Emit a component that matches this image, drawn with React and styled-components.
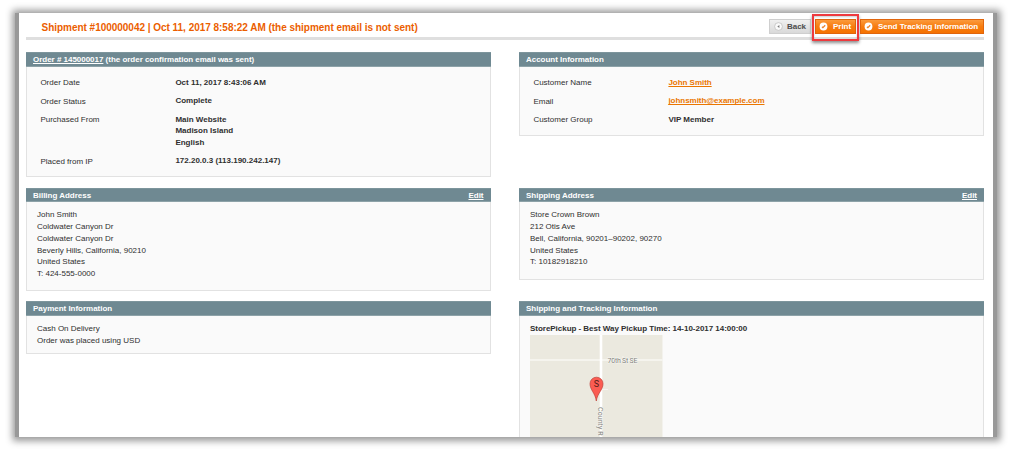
import React from "react";
import styled, { createGlobalStyle, css } from "styled-components";

const GlobalStyle = createGlobalStyle`
  * { box-sizing: border-box; }
  body {
    margin: 0;
    background: #fff;
    font-family: "Liberation Sans", Arial, sans-serif;
    font-size: 8px;
    line-height: 11.8px;
    color: #2f2f2f;
    overflow: hidden;
  }
`;

const Stage = styled.div`
  height: 451px;
  padding: 13px 15px 14px;
`;

const Shadow = styled.div`
  height: 424px;
  padding: 0 4px;
  background: #999;
  box-shadow: 0 0.5px 7px 3.5px #999;
`;

const Sheet = styled.main`
  height: 100%;
  padding: 6px 9px 0 7px;
  background: #fff;
  overflow: hidden;
`;

const Header = styled.header`
  display: flex;
  justify-content: space-between;
  height: 21px;
  border-bottom: 3px solid #dfdfdf;
`;

const Title = styled.h1`
  margin: 0;
  padding: 3px 0 0 15.5px;
  font-size: 10px;
  line-height: 12px;
  letter-spacing: -0.025px;
  color: #eb5e00;
  white-space: nowrap;
`;

const Actions = styled.div`
  display: flex;
  gap: 4px;
`;

const Button = styled.button`
  position: relative;
  display: flex;
  align-items: center;
  gap: 5px;
  width: ${(p) => p.$width}px;
  height: 15px;
  padding: 0 0 0 3px;
  border: 1px solid #e0650c;
  background: linear-gradient(#fb9a3c, #f77d10 50%, #f57200);
  color: #fff;
  font: bold 8px/12px "Liberation Sans", Arial, sans-serif;
  letter-spacing: -0.03px;
  white-space: nowrap;
  ${(p) =>
    p.$muted &&
    css`
      padding-left: 4px;
      gap: 4px;
      border-color: #cfcfcf;
      background: linear-gradient(#f0f0f0, #d9d9d9);
      color: #4c4c4c;
    `}
`;

const Highlight = styled.span`
  position: absolute;
  inset: -6px -4px -8px -4px;
  border: 2px solid #ee3a3f;
  box-shadow: 0 2px 3px rgba(0, 0, 0, 0.45), inset 0 1px 2px rgba(0, 0, 0, 0.2);
`;

const Columns = styled.div`
  display: grid;
  grid-template-columns: 464.5px 465px;
  grid-template-rows: 125px 103px auto;
  gap: 10.5px 28.5px;
  align-items: start;
  padding-top: 12px;
`;

const Panel = styled.section`
  height: ${(p) => p.$height}px;
  border: 1px solid #e2e2e2;
  border-top: 0;
  background: #fafafa;
`;

const PanelHead = styled.header`
  display: flex;
  justify-content: space-between;
  height: 14.5px;
  margin: 0 -1px;
  padding: 0 7px;
  border: 1px solid #64818a;
  border-top-color: #7d959c;
  border-bottom-color: #8da2a8;
  border-width: 1px 0;
  background: #6f8992;
  color: #fff;
  font-weight: bold;
  line-height: 13px;
  letter-spacing: -0.02px;
`;

const HeadLink = styled.a`
  text-decoration: underline;
`;

const Facts = styled.dl`
  display: grid;
  grid-template-columns: 135px 1fr;
  row-gap: 6.5px;
  margin: 0;
  padding: 10.5px 14px 0 13.4px;
`;

const Label = styled.dt`
  padding-top: 0.4px;
  margin-bottom: -0.4px;
`;

const Value = styled.dd`
  margin: 0;
  font-weight: bold;
`;

const Link = styled.a`
  color: #ea7601;
  text-decoration: underline;
  letter-spacing: -0.03px;
`;

const Lines = styled.div`
  padding: 7.3px 11px 0 10px;
`;

const Method = styled.strong`
  display: block;
  letter-spacing: -0.03px;
  white-space: nowrap;
`;

const MapImage = styled.svg`
  display: block;
  font-family: Roboto, sans-serif;
`;

function CheckIcon() {
  return (
    <svg width="9" height="9" viewBox="0 0 9 9">
      <circle cx="4.5" cy="4.5" r="3.9" fill="#fff" />
      <path d="M3 4.7 3.9 5.6 6.2 3.3" fill="none" stroke="#ed8128" strokeWidth="1.3" />
    </svg>
  );
}

function BackIcon() {
  return (
    <svg width="9" height="9" viewBox="0 0 9 9">
      <circle cx="4.5" cy="4.5" r="3.9" fill="#fafafa" stroke="#b8b8b8" strokeWidth="0.7" />
      <path d="M5.4 2.9v3.2L3.3 4.5z" fill="#777" />
    </svg>
  );
}

function PickupMap() {
  return (
    <MapImage width="133" height="102" viewBox="0 0 133 102">
      <rect width="132.5" height="120" fill="#ebe9df" />
      <path d="M0 25h132.5" stroke="#f8f7f3" strokeWidth="1.3" />
      <path d="M71 0v120" stroke="#fff" strokeWidth="2.6" />
      <path d="M72 54.5h6M93 25v-4" stroke="#f5f4ef" strokeWidth="1" />
      <g fill="#85857f" stroke="#f5f4ef" strokeWidth="1" paintOrder="stroke" fontSize="7">
        <text x="77.5" y="27.7" textLength="30">70th St SE</text>
        <text transform="translate(68 72) rotate(90)" textLength="28.5">County R</text>
      </g>
      <path
        d="M66.3 66C65.3 58 60 55 60 48.7a6.5 6.5 0 0 1 13 0C73 55 67.4 58 66.3 66z"
        fill="#fb5c52"
        stroke="#bd4038"
        strokeWidth="0.7"
      />
      <text x="66.5" y="52" textAnchor="middle" fontSize="9" fill="#531c19">S</text>
    </MapImage>
  );
}

export default function App() {
  return (
    <>
      <GlobalStyle />
      <Stage>
        <Shadow>
          <Sheet>
            <Header>
              <Title>Shipment #100000042 | Oct 11, 2017 8:58:22 AM (the shipment email is not sent)</Title>
              <Actions>
                <Button $muted $width={42}><BackIcon />Back</Button>
                <Button $width={41}><CheckIcon />Print<Highlight /></Button>
                <Button $width={124}><CheckIcon />Send Tracking Information</Button>
              </Actions>
            </Header>
            <Columns>
              <Panel $height={125}>
                <PanelHead>
                  <span><HeadLink>Order # 145000017</HeadLink> (the order confirmation email was sent)</span>
                </PanelHead>
                <Facts>
                  <Label>Order Date</Label>
                  <Value>Oct 11, 2017 8:43:06 AM</Value>
                  <Label>Order Status</Label>
                  <Value>Complete</Value>
                  <Label>Purchased From</Label>
                  <Value>Main Website<br />Madison Island<br />English</Value>
                  <Label>Placed from IP</Label>
                  <Value>172.20.0.3 (113.190.242.147)</Value>
                </Facts>
              </Panel>
              <Panel $height={84}>
                <PanelHead>Account Information</PanelHead>
                <Facts>
                  <Label>Customer Name</Label>
                  <Value><Link>John Smith</Link></Value>
                  <Label>Email</Label>
                  <Value><Link>johnsmith@example.com</Link></Value>
                  <Label>Customer Group</Label>
                  <Value>VIP Member</Value>
                </Facts>
              </Panel>
              <Panel $height={103.5}>
                <PanelHead><span>Billing Address</span><HeadLink>Edit</HeadLink></PanelHead>
                <Lines>
                  John Smith<br />Coldwater Canyon Dr<br />Coldwater Canyon Dr<br />
                  Beverly Hills, California, 90210<br />United States<br />T: 424-555-0000
                </Lines>
              </Panel>
              <Panel $height={92}>
                <PanelHead><span>Shipping Address</span><HeadLink>Edit</HeadLink></PanelHead>
                <Lines>
                  Store Crown Brown<br />212 Otis Ave<br />Bell, California, 90201–90202, 90270<br />
                  United States<br />T: 10182918210
                </Lines>
              </Panel>
              <Panel $height={52.5}>
                <PanelHead>Payment Information</PanelHead>
                <Lines>Cash On Delivery<br />Order was placed using USD</Lines>
              </Panel>
              <Panel $height={150}>
                <PanelHead>Shipping and Tracking Information</PanelHead>
                <Lines>
                  <Method>StorePickup - Best Way Pickup Time: 14-10-2017 14:00:00</Method>
                  <PickupMap />
                </Lines>
              </Panel>
            </Columns>
          </Sheet>
        </Shadow>
      </Stage>
    </>
  );
}
